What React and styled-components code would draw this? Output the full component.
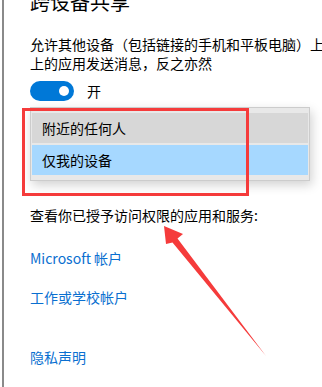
import React from "react";
import styled, { createGlobalStyle } from "styled-components";

const GlobalStyle = createGlobalStyle`
  html, body {
    margin: 0;
    padding: 0;
    background: #fff;
    overflow: hidden;
  }
  body {
    font-family: "Noto Sans CJK SC", "Noto Sans", sans-serif;
    color: #000;
  }
`;

const Frame = styled.div`
  position: relative;
  margin-left: 2px;
  border-left: 2px solid #8a8a8a;
  height: 387px;
  padding-left: 26px;
  overflow: hidden;
`;

const Title = styled.h1`
  margin: -12px 0 0 0;
  font-size: 20px;
  line-height: 28px;
  font-weight: 400;
  white-space: nowrap;
`;

const Text = styled.p`
  margin: ${(p) => p.$top || 0}px 0 0 0;
  font-size: 14px;
  line-height: ${(p) => p.$lh || 20}px;
  white-space: ${(p) => (p.$wrap ? "normal" : "nowrap")};
  width: ${(p) => (p.$wrap ? "296px" : "auto")};
`;

const ToggleRow = styled.div`
  display: flex;
  align-items: center;
  gap: 13px;
  margin-top: 8px;
  height: 20px;
  font-size: 14px;
`;

const Toggle = styled.div`
  width: 44px;
  height: 20px;
  border-radius: 10px;
  background: #0078d7;
  display: flex;
  align-items: center;
  justify-content: flex-end;
  padding-right: 5px;
  box-sizing: border-box;
  &::after {
    content: "";
    width: 10px;
    height: 10px;
    border-radius: 50%;
    background: #fff;
  }
`;

const Menu = styled.div`
  margin-top: 6px;
  width: 280px;
  box-sizing: border-box;
  border: 1px solid #cccccc;
  background: #e8e8e8;
  padding: 5px 1px 5px 1px;
  display: flex;
  flex-direction: column;
  gap: 2px;
  box-shadow: 2px 4px 10px rgba(0, 0, 0, 0.18);
`;

const MenuItem = styled.div`
  height: 30px;
  display: flex;
  align-items: center;
  padding-left: 10px;
  font-size: 14px;
  background: ${(p) => (p.$selected ? "#a6d8ff" : "#d7d7d7")};
`;

const Link = styled.a`
  display: block;
  margin-top: ${(p) => p.$top}px;
  font-size: 14px;
  line-height: 20px;
  color: #0a6fd0;
  text-decoration: none;
  white-space: nowrap;
`;

const Highlight = styled.div`
  position: absolute;
  left: 18px;
  top: 108px;
  width: 227px;
  height: 88px;
  box-sizing: border-box;
  border: 3.5px solid #f53b3b;
`;

const Arrow = styled.svg`
  position: absolute;
  left: -4px;
  top: 0;
  width: 322px;
  height: 387px;
  pointer-events: none;
`;

export default function App() {
  return (
    <>
      <GlobalStyle />
      <Frame>
        <Title>跨设备共享</Title>
        <Text $top={19} $lh={19}>
          允许其他设备（包括链接的手机和平板电脑）上
          <br />
          上的应用发送消息，反之亦然
        </Text>
        <ToggleRow>
          <Toggle />
          <span>开</span>
        </ToggleRow>
        <Menu>
          <MenuItem>附近的任何人</MenuItem>
          <MenuItem $selected>仅我的设备</MenuItem>
        </Menu>
        <Text $top={24}>查看你已授予访问权限的应用和服务:</Text>
        <Link href="#" $top={23}>Microsoft 帐户</Link>
        <Link href="#" $top={19}>工作或学校帐户</Link>
        <Link href="#" $top={40}>隐私声明</Link>
        <Highlight />
        <Arrow viewBox="0 0 322 387">
          <polygon
            points="164,226 183,234 177.5,238.5 266,356 172.5,242.5 166,244"
            fill="#f53b3b"
          />
        </Arrow>
      </Frame>
    </>
  );
}
